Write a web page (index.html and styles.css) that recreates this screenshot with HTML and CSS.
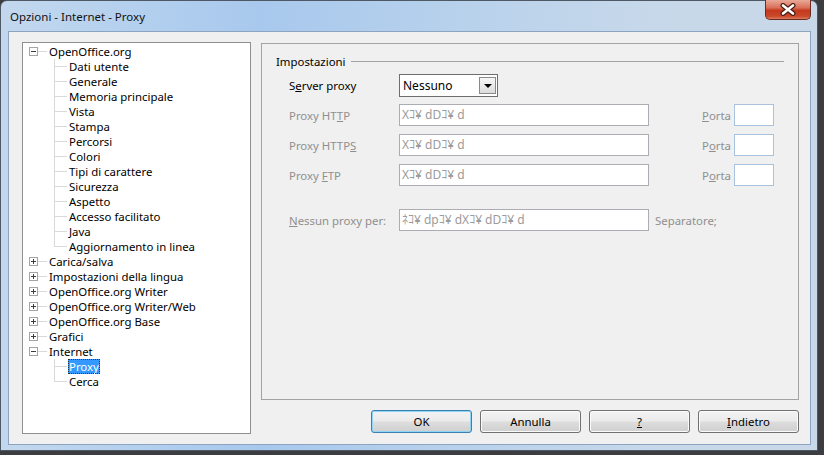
FILE: index.html
```html
<!DOCTYPE html>
<html>
<head>
<link rel="stylesheet" href="styles.css">
</head>
<body>

<div class="window">
  <div class="titlebar">
    <span class="title">Opzioni - Internet - Proxy</span>
    <span class="close">
      <svg width="16" height="13" viewBox="0 0 16 13">
        <path d="M3 2.5 L13 10.5 M13 2.5 L3 10.5" stroke="#4a1d12" stroke-width="5" stroke-linecap="round"/>
        <path d="M3 2.5 L13 10.5 M13 2.5 L3 10.5" stroke="#fff" stroke-width="2.6" stroke-linecap="round"/>
      </svg>
    </span>
  </div>

  <div class="client">
    <div class="tree">
      <div class="node"><span class="exp"></span><span class="stub"></span><span class="lbl">OpenOffice.org</span></div>
      <div class="kid"><span class="branch"></span><span class="lbl">Dati utente</span></div>
      <div class="kid"><span class="branch"></span><span class="lbl">Generale</span></div>
      <div class="kid"><span class="branch"></span><span class="lbl">Memoria principale</span></div>
      <div class="kid"><span class="branch"></span><span class="lbl">Vista</span></div>
      <div class="kid"><span class="branch"></span><span class="lbl">Stampa</span></div>
      <div class="kid"><span class="branch"></span><span class="lbl">Percorsi</span></div>
      <div class="kid"><span class="branch"></span><span class="lbl">Colori</span></div>
      <div class="kid"><span class="branch"></span><span class="lbl">Tipi di carattere</span></div>
      <div class="kid"><span class="branch"></span><span class="lbl">Sicurezza</span></div>
      <div class="kid"><span class="branch"></span><span class="lbl">Aspetto</span></div>
      <div class="kid"><span class="branch"></span><span class="lbl">Accesso facilitato</span></div>
      <div class="kid"><span class="branch"></span><span class="lbl">Java</span></div>
      <div class="kid last"><span class="branch"></span><span class="lbl">Aggiornamento in linea</span></div>
      <div class="node"><span class="exp plus"></span><span class="stub"></span><span class="lbl">Carica/salva</span></div>
      <div class="node"><span class="exp plus"></span><span class="stub"></span><span class="lbl">Impostazioni della lingua</span></div>
      <div class="node"><span class="exp plus"></span><span class="stub"></span><span class="lbl">OpenOffice.org Writer</span></div>
      <div class="node"><span class="exp plus"></span><span class="stub"></span><span class="lbl">OpenOffice.org Writer/Web</span></div>
      <div class="node"><span class="exp plus"></span><span class="stub"></span><span class="lbl">OpenOffice.org Base</span></div>
      <div class="node"><span class="exp plus"></span><span class="stub"></span><span class="lbl">Grafici</span></div>
      <div class="node"><span class="exp"></span><span class="stub"></span><span class="lbl">Internet</span></div>
      <div class="kid"><span class="branch"></span><span class="lbl sel">Proxy</span></div>
      <div class="kid last"><span class="branch"></span><span class="lbl">Cerca</span></div>
    </div>

    <div class="right">
      <div class="panel">
        <div class="heading"><span>Impostazioni</span><span class="rule"></span></div>

        <div class="form">
          <span class="label">S<u>e</u>rver proxy</span>
          <div class="select"><span>Nessuno</span><span class="drop"></span></div>
          <span></span>

          <span class="label off">Proxy HT<u>T</u>P</span>
          <div class="field">Xｺ¥ dDｺ¥ d</div>
          <div class="port"><span class="off"><u>P</u>orta</span><span class="portbox"></span></div>

          <span class="label off">Proxy HTTP<u>S</u></span>
          <div class="field">Xｺ¥ dDｺ¥ d</div>
          <div class="port"><span class="off">P<u>o</u>rta</span><span class="portbox"></span></div>

          <span class="label off">Proxy <u>F</u>TP</span>
          <div class="field">Xｺ¥ dDｺ¥ d</div>
          <div class="port"><span class="off">P<u>o</u>rta</span><span class="portbox"></span></div>

          <span class="label off gap"><u>N</u>essun proxy per:</span>
          <div class="field gap">ﾈｺ¥ dpｺ¥ dXｺ¥ dDｺ¥ d</div>
          <span class="sep off gap">Separatore;</span>
        </div>
      </div>

      <div class="buttons">
        <button class="default">OK</button>
        <button>Annulla</button>
        <button><u>?</u></button>
        <button><u>I</u>ndietro</button>
      </div>
    </div>
  </div>
</div>

</body>
</html>
```

FILE: styles.css
```css
body {
  margin: 0;
  background: #3b3d40;
  font-family: "Noto Sans", "Noto Sans CJK JP", sans-serif;
  font-size: 11.4px;
  color: #000;
}

.window {
  box-sizing: border-box;
  width: 818px;
  height: 451px;
  display: flex;
  flex-direction: column;
  padding: 0 6px 5px 7px;
  border: 1px solid #4f5965;
  border-radius: 7px 7px 0 0;
  background: linear-gradient(to right, #c3d8ee 0%, #b2cfee 18%, #a8c8ed 32%, #b7d1ec 55%, #c7d8ea 80%, #c9d8e8 100%);
}

.titlebar {
  height: 30px;
  display: flex;
  align-items: flex-start;
}

.title {
  padding-left: 2px;
  line-height: 32px;
  font-size: 11.5px;
  color: #111;
}

.close {
  margin-left: auto;
  margin-top: -1px;
  width: 46px;
  height: 20px;
  box-sizing: border-box;
  border: 1px solid #6b2c22;
  border-top: none;
  border-radius: 0 0 5px 5px;
  background: linear-gradient(#e9a999 0%, #d9705a 40%, #c5391e 55%, #c9482b 85%, #dd7a5c 100%);
  display: flex;
  align-items: center;
  justify-content: center;
}

.client {
  flex: 1;
  box-sizing: border-box;
  border: 1px solid #8ca4bf;
  background: #f0f0f0;
  padding: 10px 11px 10px 13px;
  display: grid;
  grid-template-columns: 229px 1fr;
  gap: 10px;
}

/* tree on the left */
.tree {
  background: #fff;
  border: 1px solid #8e8f8f;
  padding-top: 1px;
}

.node, .kid {
  display: flex;
  align-items: center;
  height: 15px;
  white-space: nowrap;
}

.node {
  padding-left: 6px;
}

.exp {
  box-sizing: border-box;
  width: 9px;
  height: 9px;
  border: 1px solid #a4a4a4;
  background: linear-gradient(#3c3c3c, #3c3c3c) center / 5px 1px no-repeat, #fff;
}

.exp.plus {
  background: linear-gradient(#3c3c3c, #3c3c3c) center / 5px 1px no-repeat,
              linear-gradient(#3c3c3c, #3c3c3c) center / 1px 5px no-repeat, #fff;
}

.stub {
  width: 9px;
  height: 1px;
  background: #d9d9d9;
  margin-right: 1px;
}

.kid {
  padding-left: 31px;
}

.branch {
  width: 13px;
  height: 15px;
  background: linear-gradient(#d9d9d9, #d9d9d9) 0 0 / 1px 100% no-repeat,
              linear-gradient(#d9d9d9, #d9d9d9) 0 7px / 13px 1px no-repeat;
}

.kid.last .branch {
  background-size: 1px 8px, 13px 1px;
}

.lbl {
  padding: 0 1px;
  line-height: 15px;
}

.kid .lbl {
  margin-left: 1px;
}

.sel {
  background: #3399ff;
  color: #fff;
  outline: 1px dotted #333;
  outline-offset: -1px;
}

/* right side */
.right {
  display: flex;
  flex-direction: column;
}

.panel {
  flex: 1;
  margin-top: 1px;
  border: 1px solid #a3a3a3;
  padding: 8px 14px 0 14px;
}

.heading {
  display: flex;
  align-items: center;
  height: 18px;
}

.rule {
  flex: 1;
  height: 1px;
  background: #a3a3a3;
  margin-left: 5px;
}

.form {
  margin-top: 4px;
  padding-left: 13px;
  display: grid;
  grid-template-columns: 110px 250px 125px;
  grid-auto-rows: 22px;
  row-gap: 8px;
  align-items: center;
}

.label {
  white-space: nowrap;
}

.off {
  color: #8f8f8f;
}

.gap {
  margin-top: 30px;
}

.select {
  box-sizing: border-box;
  width: 99px;
  height: 23px;
  margin-top: 1px;
  border: 1px solid #6e6e6e;
  background: #fff;
  display: flex;
  align-items: center;
  padding: 0 1px 0 3px;
}

.select span:first-child {
  flex: 1;
  font-size: 12px;
}

.drop {
  box-sizing: border-box;
  width: 17px;
  height: 17px;
  border: 1px solid #8a8a8a;
  background: linear-gradient(#f6f6f6, #dcdcdc);
  display: flex;
  align-items: center;
  justify-content: center;
}

.drop::after {
  content: "";
  border-left: 4px solid transparent;
  border-right: 4px solid transparent;
  border-top: 4px solid #000;
}

.field {
  box-sizing: border-box;
  height: 22px;
  border: 1px solid #abadb3;
  background: #fff;
  color: #9b9b9b;
  padding: 0 2px;
  line-height: 20px;
  font-size: 12px;
  white-space: nowrap;
}

.port {
  display: flex;
  justify-content: flex-end;
  align-items: center;
  gap: 3px;
}

.portbox {
  box-sizing: border-box;
  width: 40px;
  height: 22px;
  border: 1px solid #a9c2de;
  background: #fff;
}

.sep {
  padding-left: 6px;
}

.buttons {
  margin: 10px 0 1px;
  display: flex;
  justify-content: flex-end;
  gap: 8px;
}

button {
  width: 101px;
  height: 23px;
  border: 1px solid #707070;
  border-radius: 3px;
  background: linear-gradient(#f2f2f2 0%, #ebebeb 48%, #dddddd 52%, #cfcfcf 100%);
  box-shadow: inset 0 0 0 1px #fbfbfb;
  font-family: "Noto Sans", sans-serif;
  font-size: 11.4px;
  color: #000;
  padding: 0;
}

button.default {
  border-color: #3c7fb1;
  box-shadow: inset 0 0 0 1px #8fd3f5;
}
```
